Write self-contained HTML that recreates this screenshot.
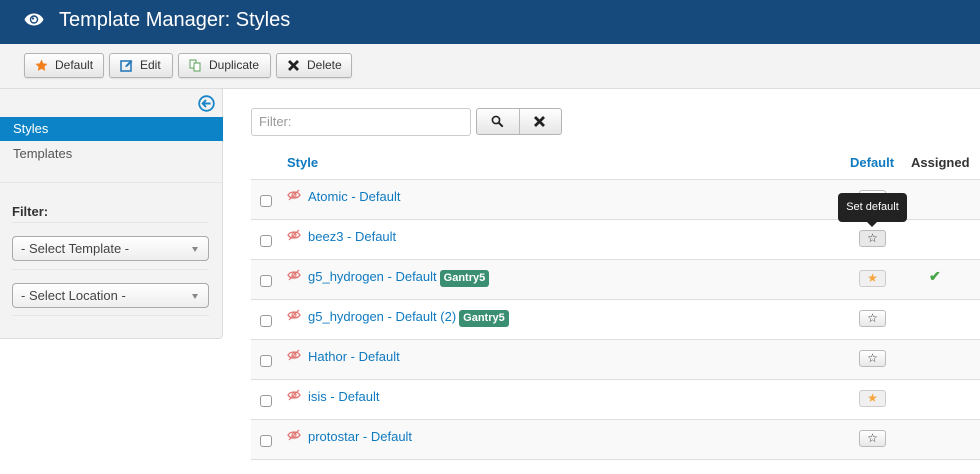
<!DOCTYPE html>
<html><head><meta charset="utf-8"><style>
*{box-sizing:border-box;margin:0;padding:0}
body{width:980px;height:474px;overflow:hidden;background:#fff;font-family:"Liberation Sans",Arial,sans-serif;font-size:13px;color:#333;position:relative}
.a{position:absolute}
.hdr{left:0;top:0;width:980px;height:44px;background:#174a7c}
.hdr h1{position:absolute;left:59px;top:9px;font-size:20px;font-weight:normal;color:#fff}
.tb{left:0;top:44px;width:980px;height:45px;background:#f3f3f3;border-bottom:1px solid #ddd}
.btn{position:absolute;top:9px;height:25px;border:1px solid #b3b3b3;border-radius:3px;background:linear-gradient(#fff,#e6e6e6);font-size:12px;color:#333;line-height:23px;padding-left:30px;box-shadow:0 1px 1px rgba(0,0,0,.08)}
.btn svg{position:absolute;left:10px;top:5px}
.side{left:0;top:89px;width:223px;height:250px;background:#f3f3f3;border-right:1px solid #ddd;border-bottom:1px solid #ddd;border-bottom-right-radius:4px}
.sel{position:absolute;left:12px;width:197px;height:25px;border:1px solid #aaa;border-radius:4px;background:linear-gradient(#fff,#eee);font-size:13px;color:#444;padding-left:8px;line-height:23px}
.sel:after{content:"";position:absolute;right:10px;top:10px;border-left:3.5px solid transparent;border-right:3.5px solid transparent;border-top:5px solid #888}
.hr{position:absolute;left:12px;width:197px;height:1px;background:#e6e6e6}
.row{position:absolute;left:251px;width:729px;height:40px;border-top:1px solid #ddd}
.row.o{background:#f9f9f9}
.cb{position:absolute;left:9px;top:15px;width:12px;height:12px;border:1px solid #999;border-radius:3px;background:#fff}
.eye{position:absolute;left:36px;top:9px}
.nm{position:absolute;left:57px;top:9px;color:#0f7ac0;font-size:13px}
.bd{display:inline-block;background:#3a8f73;color:#fff;font-weight:bold;font-size:11px;padding:2px 4px;border-radius:3px;margin-left:3px;line-height:13px}
.st{position:absolute;left:608px;top:10px;width:27px;height:17px;border:1px solid #bbb;border-radius:3px;background:linear-gradient(#fff,#e8e8e8);text-align:center;font-size:12px;line-height:15px;color:#333}
.st.y{background:#f0f0f0;color:#f7a63f;border-color:#ccc}
</style></head><body>
<div class="a hdr">
<svg class="a" style="left:24px;top:12px" width="20" height="15" viewBox="0 0 20 15"><path d="M0.5 7.5C4 -0.5 16 -0.5 19.5 7.5C16 15.5 4 15.5 0.5 7.5Z" fill="#fff"/><circle cx="10" cy="7.5" r="4.2" fill="#174a7c"/><circle cx="10" cy="7.5" r="2.8" fill="#fff"/><circle cx="9" cy="6.5" r="1.1" fill="#174a7c"/></svg>
<h1>Template Manager: Styles</h1></div>
<div class="a tb">
<div class="btn" style="left:24px;width:80px"><svg width="13" height="13" viewBox="0 0 24 24"><path d="M12 1l3.4 7 7.6 1-5.5 5.3 1.3 7.7L12 18.3 5.2 22l1.3-7.7L1 9l7.6-1z" fill="#f2811d"/></svg>Default</div>
<div class="btn" style="left:109px;width:64px"><svg width="13" height="13" viewBox="0 0 13 13"><rect x="1" y="2" width="10" height="10" fill="none" stroke="#2b7bb9" stroke-width="1.6"/><path d="M5 8l1-2 5-5 1.5 1.5-5 5z" fill="#2b7bb9"/></svg>Edit</div>
<div class="btn" style="left:178px;width:93px"><svg width="13" height="13" viewBox="0 0 13 13"><rect x="1" y="1" width="6" height="8" fill="#fff" stroke="#5aa05a"/><rect x="5" y="4" width="6" height="8" fill="#fff" stroke="#5aa05a"/></svg>Duplicate</div>
<div class="btn" style="left:276px;width:76px"><svg width="13" height="13" viewBox="0 0 13 13"><path d="M2 2l9 9M11 2l-9 9" stroke="#222" stroke-width="2.8"/></svg>Delete</div>
</div>
<div class="a side">
<svg class="a" style="left:198px;top:6px" width="17" height="17" viewBox="0 0 17 17"><circle cx="8.5" cy="8.5" r="7.3" fill="none" stroke="#1a86c9" stroke-width="1.8"/><path d="M12.5 8.5H5M8 5L4.7 8.5 8 12" fill="none" stroke="#1a86c9" stroke-width="2"/></svg>
<div class="a" style="left:0;top:28px;width:223px;height:24px;background:#0b83c6;color:#fff;padding-left:13px;line-height:24px">Styles</div>
<div class="a" style="left:13px;top:57px;color:#555">Templates</div>
<div class="a" style="left:0;top:93px;width:222px;height:1px;background:#e6e6e6"></div>
<div class="a" style="left:12px;top:115px;font-weight:bold;color:#333">Filter:</div>
<div class="hr" style="top:133px"></div>
<div class="sel" style="top:147px">- Select Template -</div>
<div class="hr" style="top:180px"></div>
<div class="sel" style="top:194px">- Select Location -</div>
<div class="hr" style="top:226px"></div>
</div>
<div class="a" style="left:251px;top:108px;width:220px;height:28px;border:1px solid #ccc;border-radius:3px;color:#999;padding-left:7px;line-height:26px">Filter:</div>
<div class="a" style="left:476px;top:108px;width:86px;height:27px;border:1px solid #b3b3b3;border-radius:3px;background:linear-gradient(#fff,#e6e6e6)">
<div class="a" style="left:42px;top:0;width:1px;height:25px;background:#bbb"></div>
<svg class="a" style="left:14px;top:6px" width="13" height="13" viewBox="0 0 13 13"><circle cx="5" cy="5" r="3.6" fill="none" stroke="#222" stroke-width="1.6"/><path d="M7.7 7.7l4 4" stroke="#222" stroke-width="2"/></svg>
<svg class="a" style="left:56px;top:6px" width="13" height="13" viewBox="0 0 13 13"><path d="M2 2l9 9M11 2l-9 9" stroke="#222" stroke-width="2.8"/></svg>
</div>
<div class="a" style="left:287px;top:155px;color:#0f7ac0;font-weight:bold">Style</div>
<div class="a" style="left:850px;top:155px;color:#0f7ac0;font-weight:bold">Default</div>
<div class="a" style="left:911px;top:155px;color:#333;font-weight:bold">Assigned</div>
<svg width="0" height="0" style="position:absolute"><defs><symbol id="e" viewBox="0 0 14 12"><path d="M1 6C3.5 2 10.5 2 13 6C10.5 10 3.5 10 1 6Z" fill="none" stroke="#e0706e" stroke-width="1.2"/><circle cx="7" cy="6" r="2" fill="none" stroke="#e0706e" stroke-width="1.1"/><path d="M2 11L12 1" stroke="#e0706e" stroke-width="1.2"/></symbol></defs></svg>
<div class="row o" style="top:179px"><div class="cb"></div><svg class="eye" width="14" height="12"><use href="#e"/></svg><div class="nm">Atomic - Default</div><div class="st">☆</div></div>
<div class="row" style="top:219px"><div class="cb"></div><svg class="eye" width="14" height="12"><use href="#e"/></svg><div class="nm">beez3 - Default</div><div class="st" style="background:#e8e8e8">☆</div></div>
<div class="row o" style="top:259px"><div class="cb"></div><svg class="eye" width="14" height="12"><use href="#e"/></svg><div class="nm">g5_hydrogen - Default<span class="bd">Gantry5</span></div><div class="st y">★</div><div class="a" style="left:678px;top:8px;color:#46a546;font-size:14px;font-weight:bold">✔</div></div>
<div class="row" style="top:299px"><div class="cb"></div><svg class="eye" width="14" height="12"><use href="#e"/></svg><div class="nm">g5_hydrogen - Default (2)<span class="bd">Gantry5</span></div><div class="st">☆</div></div>
<div class="row o" style="top:339px"><div class="cb"></div><svg class="eye" width="14" height="12"><use href="#e"/></svg><div class="nm">Hathor - Default</div><div class="st">☆</div></div>
<div class="row" style="top:379px"><div class="cb"></div><svg class="eye" width="14" height="12"><use href="#e"/></svg><div class="nm">isis - Default</div><div class="st y">★</div></div>
<div class="row o" style="top:419px"><div class="cb"></div><svg class="eye" width="14" height="12"><use href="#e"/></svg><div class="nm">protostar - Default</div><div class="st">☆</div></div>
<div class="row" style="top:459px;height:1px"></div>
<div class="a" style="left:838px;top:193px;width:69px;height:29px;background:#222;border-radius:4px;color:#fff;font-size:11px;text-align:center;line-height:29px">Set default</div>
<div class="a" style="left:867px;top:222px;border-left:5px solid transparent;border-right:5px solid transparent;border-top:5px solid #222"></div>
</body></html>
